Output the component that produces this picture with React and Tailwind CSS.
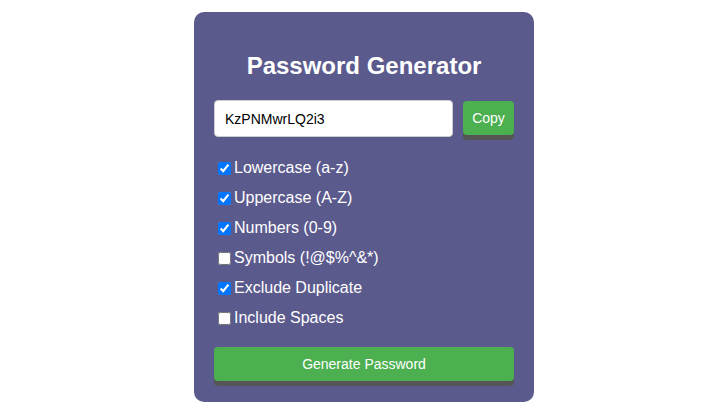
import React from 'react';

const OPTIONS = [
  ['lower', 'Lowercase (a-z)', true],
  ['upper', 'Uppercase (A-Z)', true],
  ['numbers', 'Numbers (0-9)', true],
  ['symbols', 'Symbols (!@$%^&*)', false],
  ['dupes', 'Exclude Duplicate', true],
  ['spaces', 'Include Spaces', false],
];

export default function App() {
  const [password] = React.useState('KzPNMwrLQ2i3');

  return (
    <div className="min-h-[413px] bg-white flex justify-center pl-[16px] pt-[12px] font-['Liberation_Sans',Arial,sans-serif]">
      <div className="w-[340px] h-[390px] bg-[#5b5a8d] rounded-[10px] px-5 pt-5 text-white">
        <h1 className="mt-5 mb-5 text-[24px] leading-[28px] font-bold text-center">Password Generator</h1>
        <div className="flex items-start gap-[10px]">
          <input
            type="text"
            readOnly
            value={password}
            className="w-[239px] h-[37px] bg-white text-black text-[14px] px-[10px] rounded-[4px] border border-[#ccc] outline-none"
          />
          <button className="mt-px w-[51px] h-[34px] bg-[#4caf50] text-white text-[14px] rounded-[4px] shadow-[0_5px_0_#555]">
            Copy
          </button>
        </div>
        <div className="mt-[22px] flex flex-col gap-[12px]">
          {OPTIONS.map(([id, label, on]) => (
            <label key={id} className="flex items-center h-[18px] text-[16px] leading-[18px]">
              <input type="checkbox" defaultChecked={on} className="w-[13px] h-[13px] ml-[4px] mr-[3px]" />
              {label}
            </label>
          ))}
        </div>
        <button className="mt-[20px] w-full h-[34px] bg-[#4caf50] text-white text-[14px] rounded-[4px] shadow-[0_5px_0_#555]">
          Generate Password
        </button>
      </div>
    </div>
  );
}
